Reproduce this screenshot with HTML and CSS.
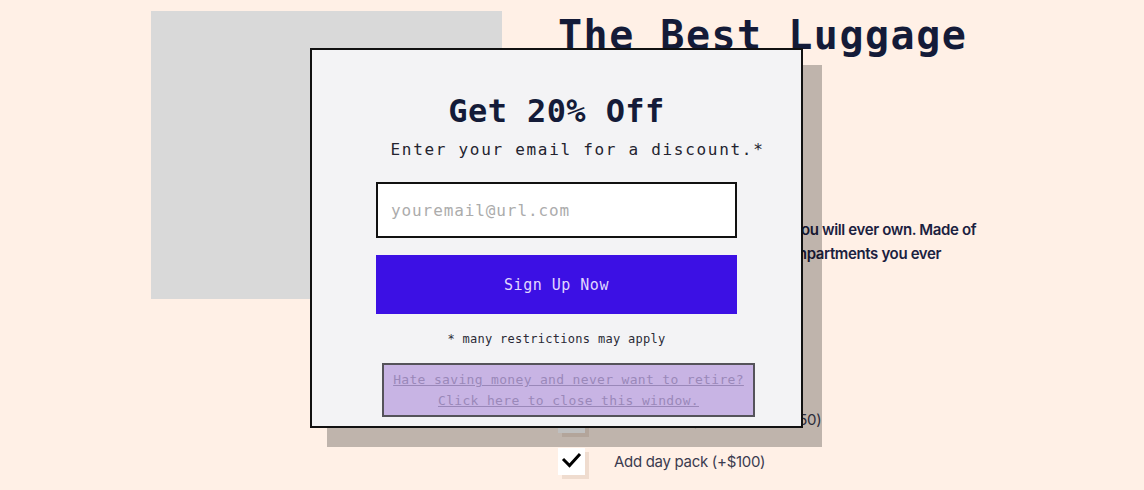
FILE: index.html
```html
<!DOCTYPE html>
<html lang="en">
<head>
<meta charset="utf-8">
<title>The Best Luggage</title>
<link rel="stylesheet" href="styles.css">
</head>
<body>
<main class="product">
  <div class="product-image"></div>
  <section class="product-info">
    <h1 class="product-title">The Best Luggage</h1>
    <p class="product-price">$495</p>
    <p class="product-desc">This is your final piece of luggage you will ever own. Made of<br>durable materials with all of the compartments you ever<br>need.</p>
    <ul class="options">
      <li class="option">
        <span class="checkbox"></span>
        <span class="option-label">Add packing cubes set (+$50)</span>
      </li>
      <li class="option">
        <span class="checkbox">
          <svg width="27" height="27" viewBox="0 0 27 27"><polyline points="5,11 11.5,17.5 22,6" fill="none" stroke="#000" stroke-width="3"/></svg>
        </span>
        <span class="option-label">Add day pack (+$100)</span>
      </li>
    </ul>
  </section>
</main>

<div class="modal">
  <h2 class="modal-title">Get 20% Off</h2>
  <p class="modal-sub">Enter your email for a discount.*</p>
  <input class="modal-input" type="email" placeholder="youremail@url.com">
  <button class="modal-button" type="button">Sign Up Now</button>
  <p class="modal-fine">* many restrictions may apply</p>
  <a class="modal-close" href="#">Hate saving money and never want to retire?<br>Click here to close this window.</a>
</div>
</body>
</html>
```

FILE: styles.css
```css
* { box-sizing: border-box; }

body {
  margin: 0;
  background: #fff0e6;
  font-family: "Inter", "Liberation Sans", sans-serif;
  height: 490px;
  overflow: hidden;
}

.product {
  display: grid;
  grid-template-columns: 351px 1fr;
  column-gap: 56px;
  padding: 11px 0 0 151px;
}

.product-image {
  height: 288px;
  background: #d9d9d9;
}

.product-info {
  display: flex;
  flex-direction: column;
  letter-spacing: -0.3px;
}

.product-title {
  margin: 0;
  font-family: "DejaVu Sans Mono", monospace;
  font-weight: bold;
  font-size: 40px;
  line-height: 48px;
  letter-spacing: 1.5px;
  color: #141b38;
}

.product-price {
  margin: 44px 0 0;
  font-size: 24px;
  line-height: 32px;
  color: #141b38;
}

.product-desc {
  margin: 83px 0 0;
  font-size: 15px;
  line-height: 24px;
  font-weight: 600;
  letter-spacing: -0.36px;
  color: #1b2140;
}

.options {
  list-style: none;
  margin: 116px 0 0;
  padding: 0;
  display: flex;
  flex-direction: column;
  gap: 15px;
}

.option {
  display: flex;
  align-items: center;
  gap: 29px;
}

.checkbox {
  width: 27px;
  height: 27px;
  background: #fff;
  box-shadow: 4px 4px 0 rgba(120, 80, 40, 0.12);
  display: block;
  flex-shrink: 0;
}

.checkbox svg { display: block; }

.option-label {
  font-size: 15px;
  line-height: 20px;
  color: #3b3b4f;
}

.modal {
  position: absolute;
  left: 310px;
  top: 48px;
  width: 493px;
  height: 380px;
  border: 2px solid #111;
  background: #f3f3f5;
  box-shadow: 18px 18px 0 1px rgba(0, 0, 0, 0.25);
  padding: 41px 64px 9px;
  display: flex;
  flex-direction: column;
  align-items: center;
  font-family: "DejaVu Sans Mono", monospace;
}

.modal > * { flex-shrink: 0; }

.modal-title {
  margin: 0;
  font-size: 32px;
  line-height: 40px;
  font-weight: bold;
  letter-spacing: 0.4px;
  color: #141b38;
}

.modal-sub {
  margin: 9px 0 0 42px;
  font-size: 16px;
  line-height: 20px;
  letter-spacing: 1.7px;
  color: #23232f;
  white-space: nowrap;
}

.modal-input {
  margin-top: 22px;
  width: 100%;
  height: 56px;
  border: 2px solid #111;
  background: #fff;
  padding: 0 13px;
  font-family: "DejaVu Sans Mono", monospace;
  font-size: 16px;
  letter-spacing: 0.9px;
  outline: none;
}

.modal-input::placeholder { color: #acacac; }

.modal-button {
  margin-top: 17px;
  width: 100%;
  height: 59px;
  border: none;
  background: #3c10e4;
  color: #e0d8ff;
  font-family: "DejaVu Sans Mono", monospace;
  font-size: 15px;
  letter-spacing: 0.5px;
}

.modal-fine {
  margin: 17px 0 0;
  font-size: 12px;
  line-height: 16px;
  letter-spacing: 0.3px;
  color: #2a2a35;
  white-space: nowrap;
}

.modal-close {
  margin-top: 16px;
  margin-left: 24px;
  display: block;
  border: 2px solid #55535a;
  background: #c8b4e4;
  padding: 4px 9px;
  font-size: 13px;
  line-height: 21px;
  letter-spacing: 0.33px;
  color: #9a88b9;
  text-align: center;
  text-decoration: underline;
  white-space: nowrap;
}
```
